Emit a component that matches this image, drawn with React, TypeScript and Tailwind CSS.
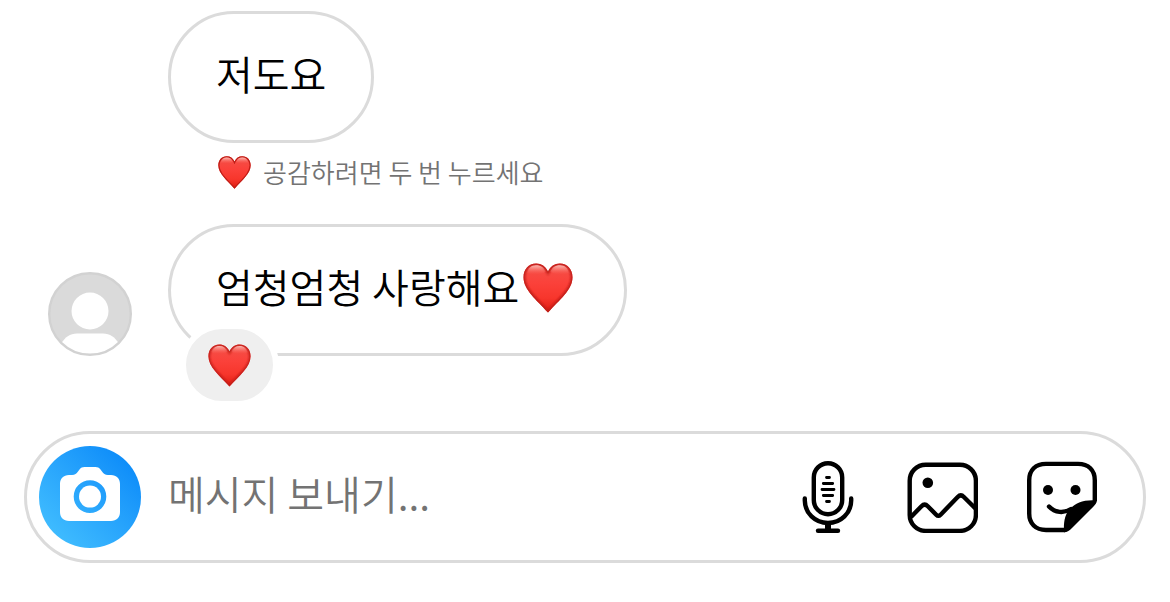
import React from 'react';

type IconProps = { className?: string };

// Glossy heart, the edge is darker than the middle and each lobe has a highlight
const Heart: React.FC<IconProps & { id: string }> = ({ className, id }) => (
  <svg viewBox="0 0 50 50" className={className} role="img" aria-label="하트">
    <defs>
      <linearGradient id={`${id}-base`} x1="0" y1="0" x2="0" y2="1">
        <stop offset="0" stopColor="#f2524a" />
        <stop offset="0.4" stopColor="#fb413a" />
        <stop offset="0.7" stopColor="#f7362c" />
        <stop offset="1" stopColor="#dc1a10" />
      </linearGradient>
      <linearGradient id={`${id}-shine`} x1="0" y1="0" x2="0" y2="1">
        <stop offset="0" stopColor="#ffd0ca" stopOpacity="0.85" />
        <stop offset="1" stopColor="#ff6a60" stopOpacity="0" />
      </linearGradient>
      <clipPath id={`${id}-clip`}>
        <path d="M25 8.500C22.500 3.300 18.500.5 13.200.5C5.500.5.5 6.400.5 14.200C.5 27 13.500 36.500 25 49.500C36.500 36.500 49.500 27 49.500 14.200C49.500 6.400 44.500.5 36.800.5C31.500.5 27.500 3.300 25 8.500Z" />
      </clipPath>
      <filter id={`${id}-soft`} x="-20%" y="-20%" width="140%" height="140%">
        <feGaussianBlur stdDeviation="1" />
      </filter>
    </defs>
    <g clipPath={`url(#${id}-clip)`}>
      <path d="M0 0H50V50H0Z" fill={`url(#${id}-base)`} />
      <path
        d="M25 8.500C22.500 3.300 18.500.5 13.200.5C5.500.5.5 6.400.5 14.200C.5 27 13.500 36.500 25 49.500C36.500 36.500 49.500 27 49.500 14.200C49.500 6.400 44.500.5 36.800.5C31.500.5 27.500 3.300 25 8.500Z"
        fill="none"
        stroke="#bd1d17"
        strokeWidth="3.500"
        filter={`url(#${id}-soft)`}
      />
      <path d="M4 10C5 5 8.500 2.300 13 2.300C18 2.300 21 4.500 22.500 9C18 12 8 12 4 10Z" fill={`url(#${id}-shine)`} />
      <path d="M46 10C45 5 41.500 2.300 37 2.300C32 2.300 29 4.500 27.500 9C32 12 42 12 46 10Z" fill={`url(#${id}-shine)`} />
    </g>
  </svg>
);

const Avatar: React.FC<IconProps> = ({ className }) => (
  <svg viewBox="0 0 84 84" className={className} role="img" aria-label="프로필 사진">
    <defs>
      <clipPath id="avatar-clip">
        <circle cx="42" cy="42" r="41" />
      </clipPath>
    </defs>
    <circle cx="42" cy="42" r="41" fill="#dadada" />
    <g clipPath="url(#avatar-clip)" fill="#fff">
      <circle cx="42" cy="39" r="18.500" />
      <path d="M13 72C17 65 22 61.500 29 61.500H55C62 61.500 67 65 71 72V84H13Z" />
    </g>
    <circle cx="42" cy="42" r="40.800" fill="none" stroke="#d2d2d2" strokeWidth="2.400" />
  </svg>
);

const CameraIcon: React.FC<IconProps> = ({ className }) => (
  <svg viewBox="0 0 60 54" className={className} aria-hidden="true">
    <path
      fill="#fff"
      fillRule="evenodd"
      d="M9 8H12C15 8 16.500 6.500 18 4.500L19.500 2.500C21 .7 22.300 0 24.500 0H35.500C37.700 0 39 .7 40.500 2.500L42 4.500C43.500 6.500 45 8 48 8H51C56.500 8 60 11.500 60 17V45C60 50.500 56.500 54 51 54H9C3.500 54 0 50.500 0 45V17C0 11.500 3.500 8 9 8ZM30 13.300A16.300 16.300 0 1 0 30 45.900A16.300 16.300 0 1 0 30 13.300Z"
    />
    <circle cx="30" cy="29.600" r="11" fill="#fff" />
  </svg>
);

const MicIcon: React.FC<IconProps> = ({ className }) => (
  <svg viewBox="0 0 60 72" className={className} fill="none" stroke="#000" strokeLinecap="round" aria-hidden="true">
    <rect x="15.800" y="2.200" width="28.400" height="51" rx="14.200" strokeWidth="4.400" />
    <path d="M6.800 37.500V39.500C6.800 52 17 62 30 62S53.200 52 53.200 39.500V37.500" strokeWidth="4.400" />
    <path d="M30 62V69.500" strokeWidth="6" strokeLinecap="butt" />
    <path d="M20 69.700H40" strokeWidth="4.400" />
    <path d="M28.500 16.500H31.500M25.300 22.500H34.700M24 28.500H36M25.300 34.500H34.700M28.500 40.500H31.500" strokeWidth="2.800" />
  </svg>
);

const ImageIcon: React.FC<IconProps> = ({ className }) => (
  <svg viewBox="0 0 72 72" className={className} fill="none" stroke="#000" strokeWidth="4.400" aria-hidden="true">
    <rect x="3.700" y="3.700" width="66.200" height="66.200" rx="16" />
    <circle cx="21.800" cy="21.700" r="5.300" fill="#000" stroke="none" />
    <path d="M5 56L15.500 45.200C17.500 43.200 19.800 43.200 21.800 45.200L30.200 53.700C31.800 55.300 33 55.300 34.600 53.700L51.700 36C53.800 33.900 55.800 33.900 57.900 36L70 48" />
  </svg>
);

const StickerIcon: React.FC<IconProps> = ({ className }) => (
  <svg viewBox="0 0 72 72" className={className} fill="none" stroke="#000" strokeWidth="4.400" aria-hidden="true">
    <path d="M39 69H20C9.500 69 3.200 62.500 3.200 52.500V19.200C3.200 9.200 9.500 2.900 20 2.900H52C62.500 2.900 68.800 9.200 68.800 19.200V40" />
    <path
      d="M38 71.200C37.500 60 39 53 44 48C50 41.500 58 38.500 71 39.500C70.500 42 69.500 43.500 67.500 45.500L46 67C43.500 69.500 41.500 71.200 38 71.200Z"
      fill="#000"
      stroke="none"
    />
    <circle cx="22" cy="29" r="5" fill="#000" stroke="none" />
    <circle cx="49.500" cy="29" r="5" fill="#000" stroke="none" />
    <path d="M23 45.500C29 52 38 52.500 45 48" strokeLinecap="round" />
  </svg>
);

const Bubble: React.FC<{ children: React.ReactNode }> = ({ children }) => (
  <div className="relative flex items-center rounded-[66px] border-3 border-[#dbdbdb] px-[45px] pt-7 pb-9 text-[40px] leading-[62px] whitespace-nowrap">
    {children}
  </div>
);

const App: React.FC = () => {
  return (
    <div className="bg-white pt-[11px] pb-[39px] font-['Noto_Sans_CJK_KR','Noto_Sans',sans-serif] font-[350] text-black">
      <main className="flex flex-col items-start pr-6 pl-12">
        <div className="pl-[120px]">
          <Bubble>저도요</Bubble>
        </div>

        {/* Double tap hint */}
        <p className="mt-[11px] flex items-center gap-3 pl-[170px] text-[26px] leading-9 text-[#737373]">
          <Heart id="hint" className="size-[33px]" />
          공감하려면 두 번 누르세요
        </p>

        <div className="mt-[34px] flex items-end gap-9">
          <Avatar className="size-[84px] shrink-0" />
          <Bubble>
            엄청엄청 사랑해요
            <Heart id="message" className="mt-1 mr-[6px] ml-1 size-[50px]" />
            {/* Reaction badge overlaps the bottom edge of the bubble */}
            <button
              type="button"
              aria-label="하트 공감"
              className="absolute -bottom-[54px] left-[9px] box-content flex h-[72px] w-[87px] items-center justify-center rounded-[42px] border-6 border-white bg-[#efefef]"
            >
              <Heart id="reaction" className="size-[43px]" />
            </button>
          </Bubble>
        </div>
      </main>

      {/* Message composer */}
      <form
        className="mx-6 mt-[75px] flex items-center rounded-[66px] border-3 border-[#dbdbdb] py-3 pr-[45px] pl-3"
        onSubmit={(e) => e.preventDefault()}
      >
        <button
          type="button"
          aria-label="카메라"
          className="flex size-[102px] shrink-0 items-center justify-center rounded-full bg-linear-to-tr from-[#47c4ff] to-[#0084f8] pb-1.5"
        >
          <CameraIcon className="h-[54px] w-[60px]" />
        </button>
        <input
          type="text"
          aria-label="메시지 보내기"
          placeholder="메시지 보내기..."
          className="ml-[27px] min-w-0 flex-1 pb-2 text-[40px] leading-[60px] outline-none placeholder:text-[#737373] placeholder:opacity-100"
        />
        <div className="flex shrink-0 items-center gap-12">
          <button type="button" aria-label="음성 메시지">
            <MicIcon className="h-[72px] w-[60px]" />
          </button>
          <button type="button" aria-label="사진">
            <ImageIcon className="size-[72px]" />
          </button>
          <button type="button" aria-label="스티커">
            <StickerIcon className="size-[72px]" />
          </button>
        </div>
      </form>
    </div>
  );
};

export default App;
